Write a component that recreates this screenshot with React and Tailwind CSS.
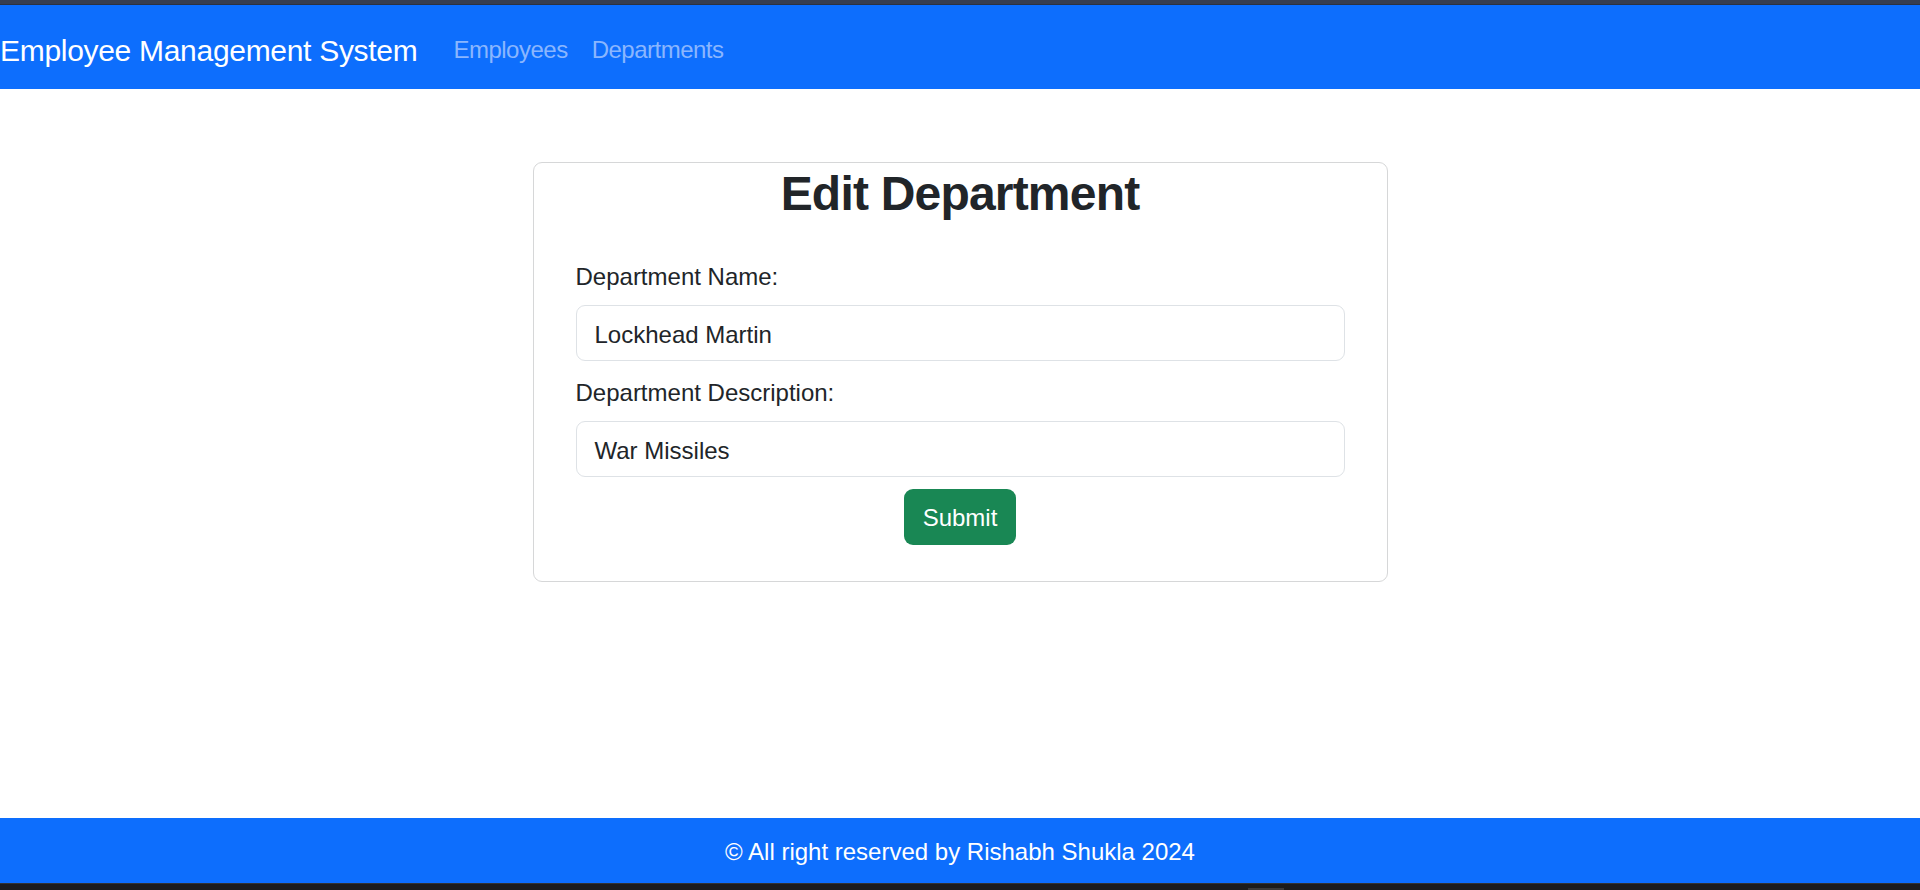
import React from "react";

export default function App() {
  const font = { fontFamily: '"Liberation Sans", Arial, sans-serif' };
  return (
    <div className="flex h-[890px] flex-col bg-white" style={font}>
      <div className="h-[5px] shrink-0 bg-[#373e4f] border-b border-[#2c3240]" />
      <nav className="flex h-[84px] shrink-0 items-center bg-[#0d6efd] pt-[6px]">
        <span className="mr-[24px] text-[30px] leading-[45px] tracking-[-0.3px] text-white">Employee Management System</span>
        <span className="px-[12px] text-[24px] leading-[36px] tracking-[-0.5px] text-[#8ab6fe]">Employees</span>
        <span className="px-[12px] text-[24px] leading-[36px] tracking-[-0.5px] text-[#8ab6fe]">Departments</span>
      </nav>
      <main className="flex-1">
        <div className="mx-auto mt-[73px] w-[855px] rounded-[9px] border border-[#d6d7d8] pb-[36px]">
          <h2 className="mb-[12px] pt-[3px] text-center text-[48px] font-bold leading-[55px] tracking-[-0.8px] text-[#212529]">
            Edit Department
          </h2>
          <div className="flex flex-col px-[42px] pt-[24px] text-[24px] text-[#212529]">
            <label className="mb-[12px] pt-[4px] leading-[32px]">Department Name:</label>
            <div className="mb-[12px] flex h-[56px] items-center rounded-[9px] border border-[#dee2e6] px-[18px] pt-[3px]">
              Lockhead Martin
            </div>
            <label className="mb-[12px] pt-[4px] leading-[32px]">Department Description:</label>
            <div className="mb-[12px] flex h-[56px] items-center rounded-[9px] border border-[#dee2e6] px-[18px] pt-[3px]">
              War Missiles
            </div>
            <div className="flex justify-center">
              <button className="flex h-[56px] items-center rounded-[9px] bg-[#198754] px-[19px] pt-[2px] text-[24px] text-white">
                Submit
              </button>
            </div>
          </div>
        </div>
      </main>
      <footer className="flex h-[65px] shrink-0 items-center justify-center bg-[#0d6efd] pt-[3px] text-[24px] text-white">
        © All right reserved by Rishabh Shukla 2024
      </footer>
      <div className="flex h-[7px] shrink-0 border-t border-[#333333] bg-[#1c1c1c]">
        <div className="ml-[1248px] mt-[4px] h-[2px] w-[36px] bg-[#3a3a3a]" />
      </div>
    </div>
  );
}
